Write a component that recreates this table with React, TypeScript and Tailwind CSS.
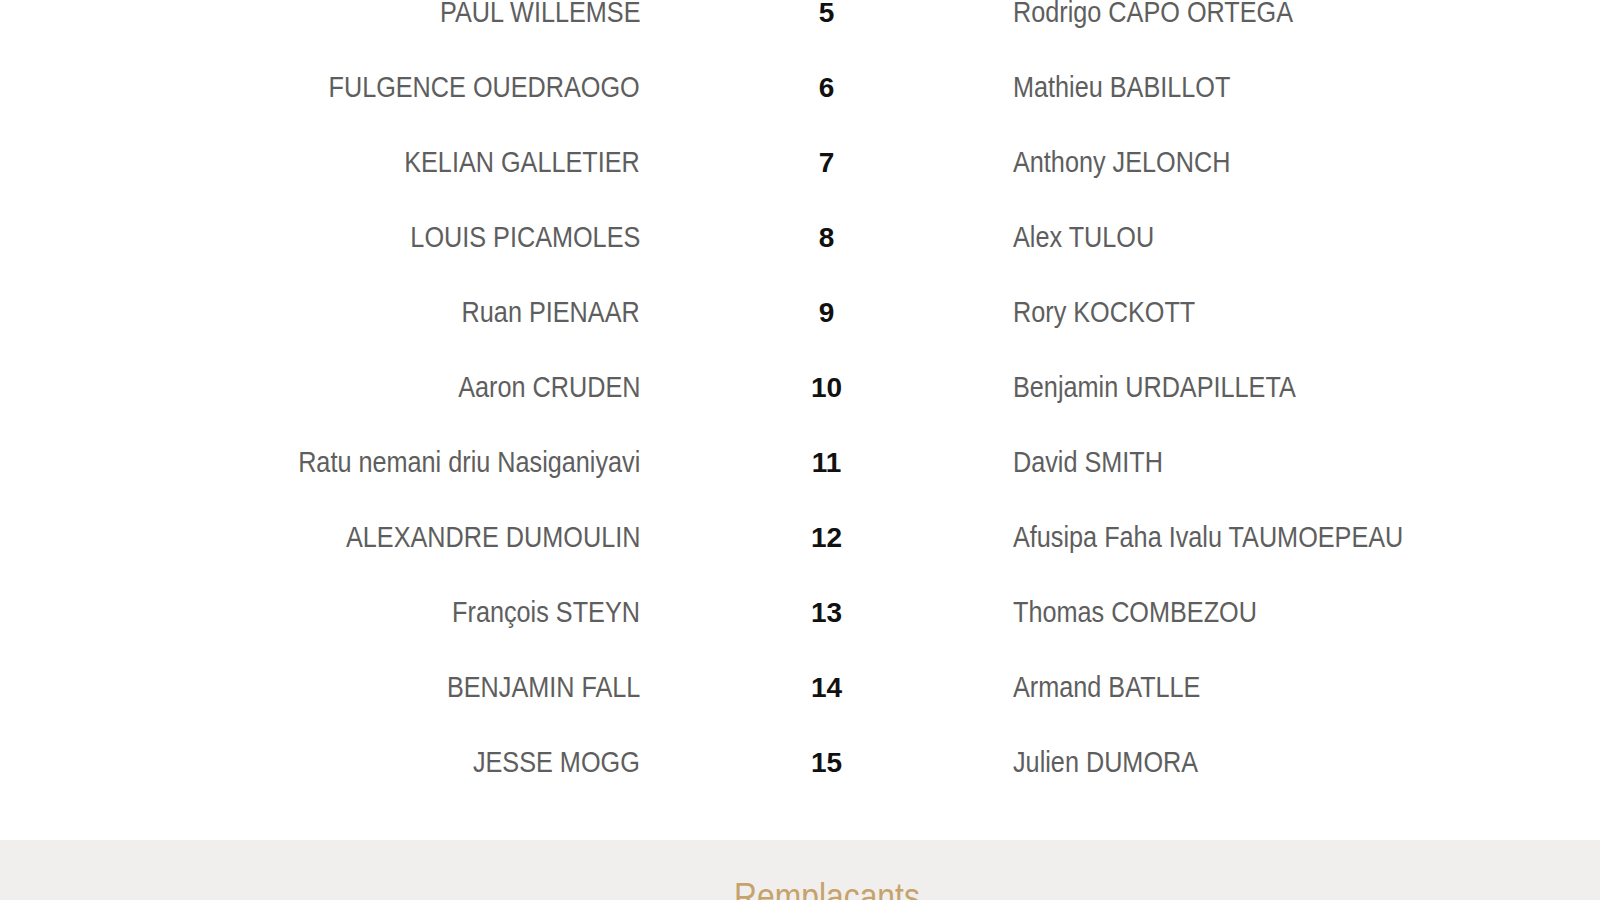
import React from "react";

const rows: [string, number, string][] = [
  ["PAUL WILLEMSE", 5, "Rodrigo CAPO ORTEGA"],
  ["FULGENCE OUEDRAOGO", 6, "Mathieu BABILLOT"],
  ["KELIAN GALLETIER", 7, "Anthony JELONCH"],
  ["LOUIS PICAMOLES", 8, "Alex TULOU"],
  ["Ruan PIENAAR", 9, "Rory KOCKOTT"],
  ["Aaron CRUDEN", 10, "Benjamin URDAPILLETA"],
  ["Ratu nemani driu Nasiganiyavi", 11, "David SMITH"],
  ["ALEXANDRE DUMOULIN", 12, "Afusipa Faha Ivalu TAUMOEPEAU"],
  ["François STEYN", 13, "Thomas COMBEZOU"],
  ["BENJAMIN FALL", 14, "Armand BATLLE"],
  ["JESSE MOGG", 15, "Julien DUMORA"],
];

// no condensed face installed, so narrow Liberation Sans a bit
const nameFont = "font-['Liberation_Sans_Narrow','Liberation_Sans',sans-serif]";

export default function App() {
  return (
    <div className="h-[900px] w-full overflow-hidden bg-white">
      {/* starting lineup, scrolled so row 5 sits at the top */}
      <div className="mt-[-25px] pb-[40px]">
        {rows.map(([home, num, away]) => (
          <div key={num} className="grid h-[75px] grid-cols-[640px_373px_1fr] items-center">
            <div className="text-right">
              <span className={`inline-block origin-right scale-x-[0.87] whitespace-nowrap text-[29px] text-[#5e5e5e] ${nameFont}`}>
                {home}
              </span>
            </div>
            <div className="text-center font-['Liberation_Sans',sans-serif] text-[28px] font-bold text-[#111]">
              {num}
            </div>
            <div className="text-left">
              <span className={`inline-block origin-left scale-x-[0.87] whitespace-nowrap text-[29px] text-[#5e5e5e] ${nameFont}`}>
                {away}
              </span>
            </div>
          </div>
        ))}
      </div>

      {/* substitutes band */}
      <div className="h-[200px] bg-[#f0efed] pt-[29px]">
        <div className="ml-[640px] w-[373px] text-center">
          <span className={`inline-block scale-x-[0.86] text-[37px] text-[#c6a26c] ${nameFont}`}>Remplaçants</span>
        </div>
      </div>
    </div>
  );
}
